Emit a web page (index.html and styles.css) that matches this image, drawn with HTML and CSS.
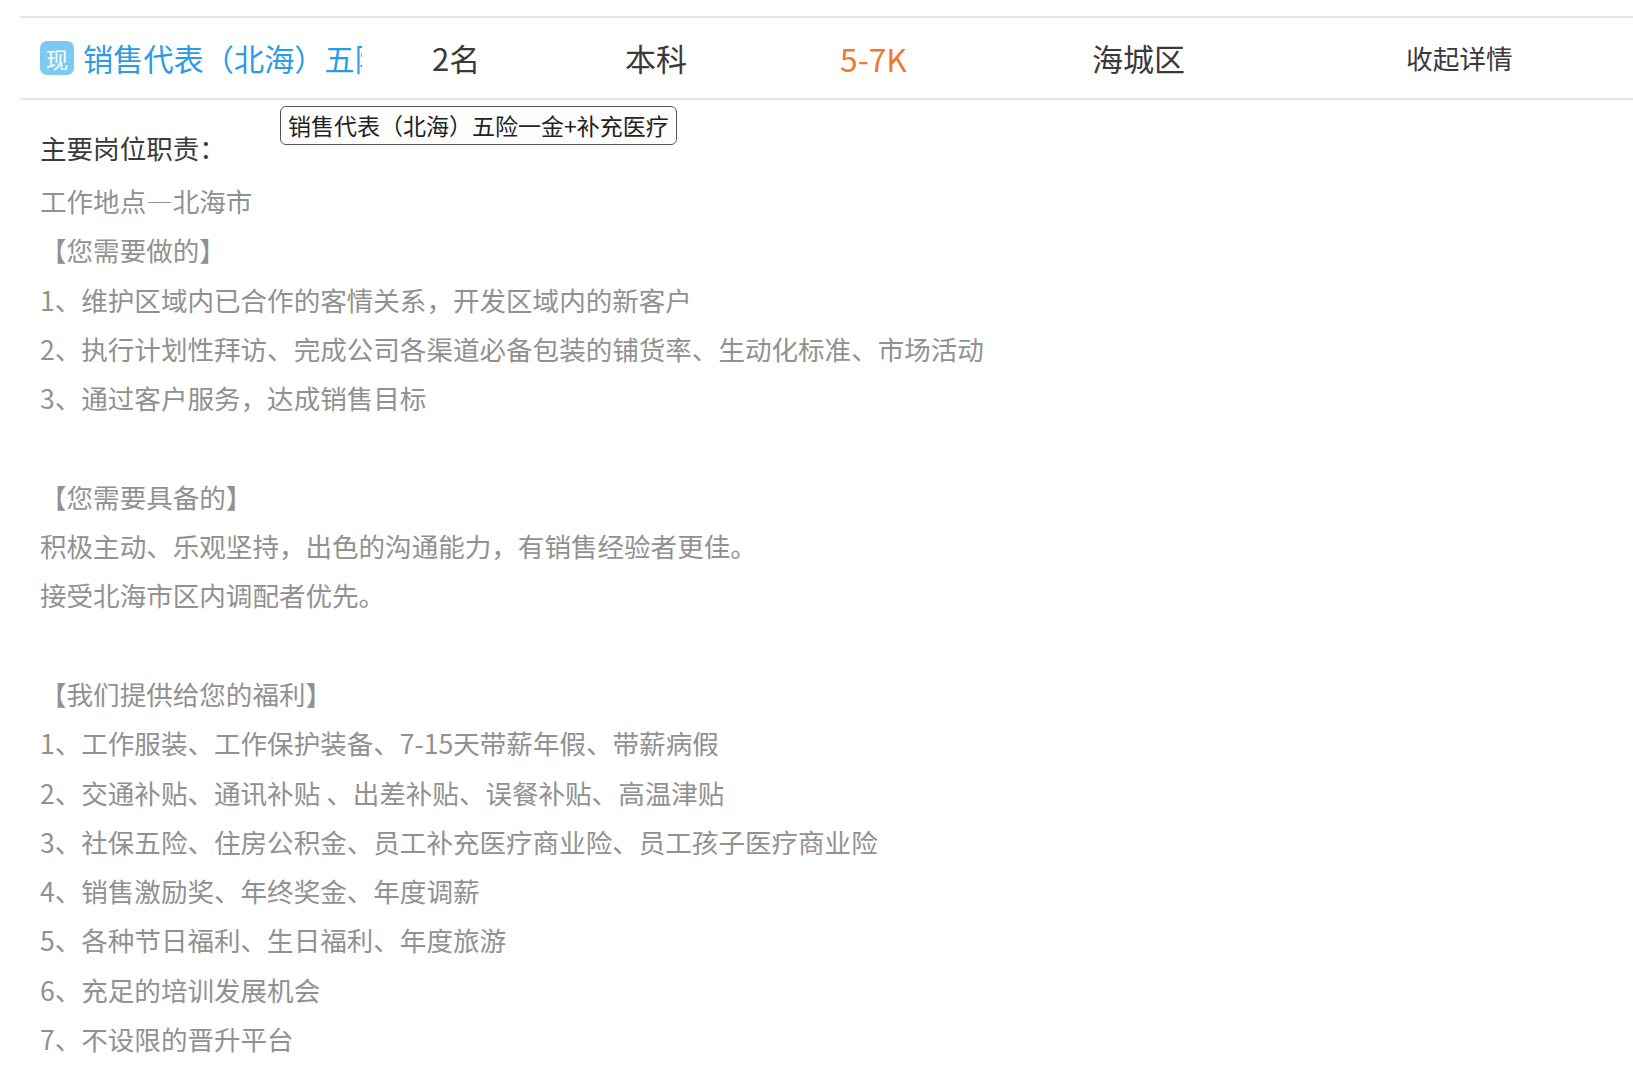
FILE: index.html
```html
<!DOCTYPE html>
<html lang="zh">
<head>
<meta charset="utf-8">
<title>职位</title>
<link rel="stylesheet" href="styles.css">
</head>
<body>
<div class="job">
  <div class="row">
    <div class="c-title"><span class="badge">现</span><span class="name">销售代表（北海）五险一金+补充医疗</span></div>
    <div class="c-num">2名</div>
    <div class="c-edu">本科</div>
    <div class="c-pay">5-7K</div>
    <div class="c-area">海城区</div>
    <div class="c-act">收起详情</div>
    <div class="tip">销售代表（北海）五险一金+补充医疗</div>
  </div>
  <div class="detail">
    <h3 class="head">主要岗位职责：</h3>
    <p>工作地点—北海市</p>
    <p>【您需要做的】</p>
    <p>1、维护区域内已合作的客情关系，开发区域内的新客户</p>
    <p>2、执行计划性拜访、完成公司各渠道必备包装的铺货率、生动化标准、市场活动</p>
    <p>3、通过客户服务，达成销售目标</p>
    <p>&nbsp;</p>
    <p>【您需要具备的】</p>
    <p>积极主动、乐观坚持，出色的沟通能力，有销售经验者更佳。</p>
    <p>接受北海市区内调配者优先。</p>
    <p>&nbsp;</p>
    <p>【我们提供给您的福利】</p>
    <p>1、工作服装、工作保护装备、7-15天带薪年假、带薪病假</p>
    <p>2、交通补贴、通讯补贴 、出差补贴、误餐补贴、高温津贴</p>
    <p>3、社保五险、住房公积金、员工补充医疗商业险、员工孩子医疗商业险</p>
    <p>4、销售激励奖、年终奖金、年度调薪</p>
    <p>5、各种节日福利、生日福利、年度旅游</p>
    <p>6、充足的培训发展机会</p>
    <p>7、不设限的晋升平台</p>
  </div>
</div>
</body>
</html>
```
FILE: styles.css
```css
* { box-sizing: border-box; }
html, body { margin: 0; padding: 0; background: #fff; }
body { font-family: "Noto Sans CJK SC", "Noto Sans", sans-serif; height: 1080px; overflow: hidden; }
.job { margin: 16px 0 0 20px; border-top: 2px solid #e4e4e4; }
.row { position: relative; display: flex; align-items: center; height: 82px; padding-bottom: 1px; border-bottom: 2px solid #e6e6e6; color: #3a3a3a; font-size: 31px; }
.c-title { width: 364px; padding-left: 20px; display: flex; align-items: center; overflow: hidden; white-space: nowrap; }
.badge { flex: none; width: 34px; height: 34px; margin-right: 9px; border-radius: 7px; background: #7ccaf2; color: #fff; font-size: 22px; text-align: center; line-height: 34px; }
.name { color: #2a9ce6; width: 279px; overflow: hidden; font-size: 30.2px; }
.c-num { width: 241px; padding-left: 48px; }
.c-edu { width: 215px; }
.c-pay { width: 252px; color: #ee7a2a; font-size: 31.8px; }
.c-area { width: 314px; }
.c-act { font-size: 26.7px; }
.tip { position: absolute; left: 260px; top: 88px; height: 39px; padding: 0 7px; border: 1.5px solid #555; border-radius: 6px; background: #fdfdfd; color: #222; font-size: 23px; line-height: 36px; white-space: nowrap; }
.detail { padding: 26px 0 0 20px; font-size: 26.55px; color: #919191; }
.head { margin: 0 0 6px; font-size: 26.55px; font-weight: 400; color: #3a3a3a; line-height: 44px; }
.detail p { margin: 0; line-height: 49.3px; height: 49.3px; white-space: nowrap; }
```
